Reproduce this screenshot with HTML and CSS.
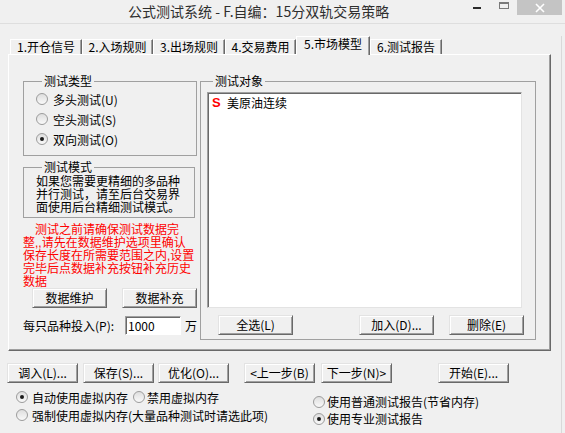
FILE: index.html
```html
<!DOCTYPE html>
<html>
<head>
<meta charset="utf-8">
<title>公式测试系统</title>
<link rel="stylesheet" href="styles.css">
</head>
<body>
<div class="window">
  <div class="titlebar">
    <div class="title">公式测试系统 - F.自编：15分双轨交易策略</div>
    <div class="winbtns">
      <span class="wb-min"></span>
      <span class="wb-max"></span>
      <span class="wb-close"><svg width="10" height="10" viewBox="0 0 10 10"><path d="M1 1L9 9M9 1L1 9" stroke="#fff" stroke-width="1.6" fill="none"/></svg></span>
    </div>
  </div>
  <div class="client">
    <div class="tabs">
      <div class="tab w72">1.开仓信号</div>
      <div class="tab w71">2.入场规则</div>
      <div class="tab w72">3.出场规则</div>
      <div class="tab w71">4.交易费用</div>
      <div class="tab sel">5.市场模型</div>
      <div class="tab w72">6.测试报告</div>
    </div>
    <div class="panel">
      <div class="leftcol">
        <fieldset class="group g-type">
          <legend>测试类型</legend>
          <div class="radio"><span class="rb"></span>多头测试(U)</div>
          <div class="radio"><span class="rb"></span>空头测试(S)</div>
          <div class="radio"><span class="rb on"></span>双向测试(O)</div>
        </fieldset>
        <fieldset class="group g-mode">
          <legend>测试模式</legend>
          <div class="modetext">如果您需要更精细的多品种<br>并行测试，请至后台交易界<br>面使用后台精细测试模式。</div>
        </fieldset>
        <div class="warn">测试之前请确保测试数据完<br>整,,请先在数据维护选项里确认<br>保存长度在所需要范围之内,设置<br>完毕后点数据补充按钮补充历史<br>数据</div>
        <div class="databtns">
          <button class="btn w75">数据维护</button>
          <button class="btn w75">数据补充</button>
        </div>
        <div class="invest">
          <span class="lbl">每只品种投入(P):</span>
          <span class="input">1000</span>
          <span>万</span>
        </div>
      </div>
      <fieldset class="group g-obj">
        <legend>测试对象</legend>
        <div class="list">
          <div class="item"><b class="s">S</b>美原油连续</div>
        </div>
        <div class="objbtns">
          <button class="btn w75">全选(L)</button>
          <button class="btn w75 add">加入(D)...</button>
          <button class="btn w75 del">删除(E)</button>
        </div>
      </fieldset>
    </div>
    <div class="bottombtns">
      <button class="btn w71">调入(L)...</button>
      <button class="btn w71 b2">保存(S)...</button>
      <button class="btn w71 b3">优化(O)...</button>
      <button class="btn w71 b4">&lt;上一步(B)</button>
      <button class="btn w71 b5">下一步(N)&gt;</button>
      <button class="btn w71 b6">开始(E)...</button>
    </div>
    <div class="options">
      <div class="optleft">
        <div class="optrow"><span class="rb on"></span>自动使用虚拟内存<span class="rb second"></span>禁用虚拟内存</div>
        <div class="optrow"><span class="rb"></span>强制使用虚拟内存(大量品种测试时请选此项)</div>
      </div>
      <div class="optright">
        <div class="optrow2"><span class="rb"></span>使用普通测试报告(节省内存)</div>
        <div class="optrow2"><span class="rb on"></span>使用专业测试报告</div>
      </div>
    </div>
  </div>
</div>
</body>
</html>
```

FILE: styles.css
```css
* { box-sizing: border-box; }
html, body { margin: 0; padding: 0; }
body {
  width: 565px;
  height: 433px;
  overflow: hidden;
  background: #f0f0f0;
  font-family: "Noto Sans CJK SC", sans-serif;
  font-size: 12px;
  color: #000;
}
.window { width: 565px; height: 433px; }

/* title bar */
.titlebar {
  height: 24px;
  border-bottom: 1px solid #dedede;
  display: flex;
  align-items: flex-start;
  padding-right: 3px;
}
.title {
  margin-left: 128px;
  font-size: 14px;
  line-height: 23px;
  color: #2e2e2e;
  white-space: nowrap;
}
.winbtns { margin-left: auto; display: flex; align-items: flex-start; }
.wb-min { width: 8px; height: 2px; background: #2b2b2b; margin-top: 7px; }
.wb-max {
  width: 10px; height: 7px;
  border: 1px solid #7a7a7a; border-top-width: 2px;
  margin: 2px 8px 0 18px;
}
.wb-close {
  width: 45px; height: 15px;
  background: #c4c4c4;
  display: flex; align-items: center; justify-content: center;
}
.wb-close svg { display: block; }

.client {
  width: 562px;
  height: 409px;
  border-right: 1px solid #d9d9d9;
}

/* tabs */
.tabs {
  display: flex;
  align-items: flex-end;
  height: 18px;
  margin-top: 12px;
  padding-left: 10px;
}
.tab {
  height: 15px;
  border-top: 1px solid #fff;
  border-left: 1px solid #fff;
  border-right: 1px solid #696969;
  box-shadow: inset -1px 0 #a0a0a0;
  text-align: center;
  line-height: 14px;
  white-space: nowrap;
}
.w72 { width: 72px; }
.w71 { width: 71px; }
.w75 { width: 75px; }
.tab.sel {
  width: 74px;
  height: 19px;
  margin-bottom: -1px;
  position: relative;
  z-index: 1;
  background: #f0f0f0;
  line-height: 14px;
}

/* panel */
.panel {
  margin-left: 8px;
  width: 543px;
  height: 297px;
  border: 1px solid;
  border-color: #fff #696969 #696969 #fff;
  box-shadow: inset -1px -1px #a0a0a0;
  display: flex;
  align-items: flex-start;
  padding: 19px 0 0 14px;
}
.leftcol { width: 174px; display: flex; flex-direction: column; }

.group {
  margin: 0;
  border: 1px solid #a0a0a0;
  min-width: 0;
  min-inline-size: 0;
}
.group legend {
  padding: 0 2px;
  margin-left: 6px;
  line-height: 14px;
  font-size: 12px;
}
.g-type { padding: 1px 0 6px 12px; }
.radio {
  display: flex;
  align-items: center;
  height: 20px;
  white-space: nowrap;
}
.rb {
  width: 12px; height: 12px;
  flex: none;
  border-radius: 50%;
  border: 1px solid #9c9c9c;
  background: linear-gradient(#dedede, #f9f9f9);
  display: inline-flex;
  align-items: center;
  justify-content: center;
  margin-right: 5px;
}
.rb.on::after {
  content: "";
  width: 4px; height: 4px;
  border-radius: 50%;
  background: #1a1a1a;
}
.g-mode { margin-top: 4px; margin-right: 2px; padding: 2px 0 2px 12px; }
.modetext {
  font-family: "Liberation Sans", "Noto Sans CJK SC", sans-serif;
  line-height: 13px;
  white-space: nowrap;
}

.warn {
  margin-top: 6px;
  color: #ff0000;
  font-family: "Liberation Sans", "Noto Sans CJK SC", sans-serif;
  line-height: 13px;
  white-space: nowrap;
  text-indent: 12px;
}

.btn {
  height: 20px;
  padding: 0;
  margin: 0;
  font: inherit;
  color: #000;
  background: #f0f0f0;
  border: 1px solid;
  border-color: #e3e3e3 #696969 #696969 #e3e3e3;
  box-shadow: inset 1px 1px #fff, inset -1px -1px #a0a0a0;
  text-align: center;
  line-height: 18px;
  white-space: nowrap;
}
.databtns { display: flex; gap: 15px; margin-top: -1px; padding-left: 9px; }

.invest { display: flex; align-items: center; height: 19px; margin-top: 8px; white-space: nowrap; }
.invest .lbl { width: 102px; }
.input {
  width: 56px; height: 19px;
  background: #fff;
  border: 1px solid;
  border-color: #a0a0a0 #fff #fff #a0a0a0;
  box-shadow: inset 1px 1px #696969;
  padding-left: 2px;
  line-height: 17px;
  margin-right: 4px;
}

.g-obj { margin-left: 3px; width: 336px; padding: 4px 0 4px 6px; }
.list {
  width: 315px; height: 216px;
  background: #fff;
  border: 1px solid;
  border-color: #a0a0a0 #e3e3e3 #e3e3e3 #a0a0a0;
  box-shadow: inset 1px 1px #696969;
  padding: 1px 0 0 4px;
}
.item { display: flex; align-items: center; height: 16px; white-space: nowrap; }
.item .s {
  width: 15px;
  color: #ff0000;
  font-family: "Liberation Sans", sans-serif;
  font-weight: bold;
  font-size: 13px;
}
.objbtns { display: flex; margin-top: 7px; padding-left: 11px; }
.objbtns .add { margin-left: 66px; }
.objbtns .del { margin-left: 15px; }

/* bottom */
.bottombtns { display: flex; margin-top: 12px; padding-left: 7px; }
.bottombtns .b2 { margin-left: 5px; }
.bottombtns .b3 { margin-left: 4px; }
.bottombtns .b4 { margin-left: 15px; }
.bottombtns .b5 { margin-left: 6px; }
.bottombtns .b6 { margin-left: 46px; }

.options { display: flex; margin-top: 5px; }
.optleft { width: 313px; padding-left: 16px; }
.optrow { display: flex; align-items: center; height: 18px; white-space: nowrap; }
.optrow .rb { margin-right: 4px; }
.optrow .rb.second { margin-left: 5px; margin-right: 2px; }
.optright { padding-top: 5px; }
.optrow2 { display: flex; align-items: center; height: 17px; white-space: nowrap; }
.optrow2 .rb { margin-right: 2px; }
```
